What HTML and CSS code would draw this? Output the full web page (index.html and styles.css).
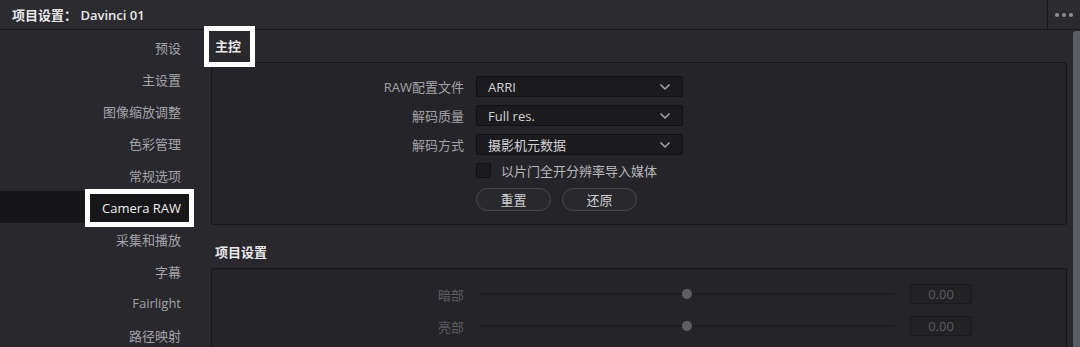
FILE: index.html
```html
<!DOCTYPE html>
<html lang="zh">
<head>
<meta charset="utf-8">
<title>项目设置</title>
<link rel="stylesheet" href="styles.css">
</head>
<body>
<div class="window">
  <header class="titlebar">
    <div class="title">项目设置： Davinci 01</div>
    <div class="more"><span></span><span></span><span></span></div>
  </header>
  <div class="body">
    <nav class="sidebar">
      <div class="nav-item">预设</div>
      <div class="nav-item">主设置</div>
      <div class="nav-item">图像缩放调整</div>
      <div class="nav-item">色彩管理</div>
      <div class="nav-item">常规选项</div>
      <div class="nav-item active"><span class="hl-nav">Camera RAW</span></div>
      <div class="nav-item">采集和播放</div>
      <div class="nav-item">字幕</div>
      <div class="nav-item">Fairlight</div>
      <div class="nav-item">路径映射</div>
    </nav>
    <main class="content">
      <div class="section-head first"><span class="hl-head">主控</span></div>
      <section class="group group-master">
        <div class="form-row">
          <label class="label">RAW配置文件</label>
          <div class="select"><span>ARRI</span><svg class="chev" viewBox="0 0 12 8" width="12" height="8"><path d="M1.5 1.5 L6 6 L10.5 1.5" fill="none" stroke="#a8a8ac" stroke-width="1.5"/></svg></div>
        </div>
        <div class="form-row">
          <label class="label">解码质量</label>
          <div class="select"><span>Full res.</span><svg class="chev" viewBox="0 0 12 8" width="12" height="8"><path d="M1.5 1.5 L6 6 L10.5 1.5" fill="none" stroke="#a8a8ac" stroke-width="1.5"/></svg></div>
        </div>
        <div class="form-row">
          <label class="label">解码方式</label>
          <div class="select"><span>摄影机元数据</span><svg class="chev" viewBox="0 0 12 8" width="12" height="8"><path d="M1.5 1.5 L6 6 L10.5 1.5" fill="none" stroke="#a8a8ac" stroke-width="1.5"/></svg></div>
        </div>
        <div class="form-row check-row">
          <span class="label"></span>
          <span class="checkbox"></span>
          <span class="check-label">以片门全开分辨率导入媒体</span>
        </div>
        <div class="form-row btn-row">
          <span class="label"></span>
          <button class="pill">重置</button>
          <button class="pill">还原</button>
        </div>
      </section>
      <div class="section-head second">项目设置</div>
      <section class="group group-project">
        <div class="slider-row">
          <span class="label dim">暗部</span>
          <div class="track"><span class="knob"></span></div>
          <div class="value">0.00</div>
        </div>
        <div class="slider-row">
          <span class="label dim">亮部</span>
          <div class="track"><span class="knob"></span></div>
          <div class="value">0.00</div>
        </div>
      </section>
    </main>
    <div class="scrollbar"><div class="thumb"></div></div>
  </div>
</div>
</body>
</html>
```
FILE: styles.css
```css
* { box-sizing: border-box; }
html, body { margin: 0; padding: 0; }
body {
  width: 1080px;
  height: 347px;
  overflow: hidden;
  background: #28282d;
  font-family: "Open Sans", "Noto Sans CJK SC", sans-serif;
  font-size: 13px;
  color: #a3a3a8;
}
.window { display: flex; flex-direction: column; height: 347px; }

.titlebar {
  height: 30px;
  flex: none;
  display: flex;
  align-items: center;
  background: #2a2a2f;
  border-bottom: 1px solid #18181b;
}
.title {
  flex: 1;
  padding-left: 12px;
  font-size: 13px;
  font-weight: 600;
  color: #e8e8ea;
}
.more {
  width: 33px;
  height: 29px;
  border-left: 1px solid #1a1a1d;
  display: flex;
  align-items: center;
  justify-content: center;
  gap: 3px;
}
.more span { width: 4px; height: 4px; border-radius: 50%; background: #8e8e93; }

.body { flex: 1; display: flex; min-height: 0; }

.sidebar {
  width: 211px;
  flex: none;
  padding-top: 1px;
  display: flex;
  flex-direction: column;
}
.nav-item {
  width: 192px;
  height: 32px;
  flex: none;
  display: flex;
  align-items: center;
  justify-content: flex-end;
  padding-right: 11px;
  color: #a3a3a8;
  white-space: nowrap;
}
.nav-item.active { background: #17171a; color: #eeeeef; padding-right: 3px; }
.hl-nav {
  display: block;
  position: relative;
  z-index: 2;
  padding: 4px 8px 4px 12px;
  outline: 5px solid #ffffff;
  line-height: 20px;
  margin-top: 2px;
}

.content {
  flex: 1;
  display: flex;
  flex-direction: column;
  min-width: 0;
}
.section-head {
  flex: none;
  color: #e8e8ea;
  font-size: 13px;
  font-weight: 600;
}
.section-head.first { height: 32px; display: flex; align-items: center; }
.hl-head {
  display: block;
  position: relative;
  z-index: 2;
  margin-left: -2px;
  margin-top: 1px;
  padding: 5px 9px 5px 6px;
  line-height: 21px;
  outline: 5px solid #ffffff;
}
.section-head.second { height: 43px; display: flex; align-items: center; padding: 9px 0 0 4px; }

.group {
  width: 856px;
  flex: none;
  background: #252529;
  border: 1px solid #161619;
  border-radius: 3px;
}
.group-master { height: 163px; padding-top: 13px; }
.group-project { flex: 1; border-bottom: none; border-radius: 3px 3px 0 0; padding-top: 15px; }

.form-row { display: flex; align-items: center; height: 21px; margin-bottom: 8px; }
.label {
  width: 252px;
  flex: none;
  text-align: right;
  margin-right: 12px;
  color: #a3a3a8;
  white-space: nowrap;
}
.select {
  width: 207px;
  height: 21px;
  display: flex;
  align-items: center;
  justify-content: space-between;
  padding: 0 11px 0 11px;
  background: #1c1c1f;
  border: 1px solid #121214;
  border-radius: 2px;
  color: #d2d2d5;
}
.chev { display: block; }
.check-row { height: 15px; margin-top: 1px; margin-bottom: 10px; }
.checkbox {
  width: 15px;
  height: 15px;
  background: #1c1c1f;
  border: 1px solid #121214;
  border-radius: 2px;
  margin-right: 10px;
}
.check-label { color: #b8b8bc; }
.btn-row { height: 23px; gap: 11px; }
.btn-row .label { margin-right: 1px; }
.pill {
  width: 75px;
  height: 23px;
  border: 1px solid #48484d;
  border-radius: 12px;
  background: #28282d;
  color: #cfcfd2;
  font-family: "Open Sans", "Noto Sans CJK SC", sans-serif;
  font-size: 13px;
  padding: 0;
}

.slider-row { display: flex; align-items: center; height: 20px; margin-bottom: 12px; }
.label.dim { color: #5c5c61; margin-right: 15px; }
.track {
  width: 416px;
  height: 2px;
  background: #1d1d20;
  position: relative;
}
.knob {
  position: absolute;
  left: 203px;
  top: -4px;
  width: 10px;
  height: 10px;
  border-radius: 50%;
  background: #5e5e63;
}
.value {
  width: 62px;
  height: 20px;
  margin-left: 15px;
  background: #222225;
  border: 1px solid #1a1a1d;
  border-radius: 2px;
  text-align: center;
  line-height: 18px;
  color: #5c5c61;
}

.scrollbar { width: 13px; flex: none; display: flex; justify-content: flex-end; padding-top: 1px; }
.thumb { width: 7px; height: 100%; background: #5a5d63; border-radius: 3px 0 0 0; }
```
